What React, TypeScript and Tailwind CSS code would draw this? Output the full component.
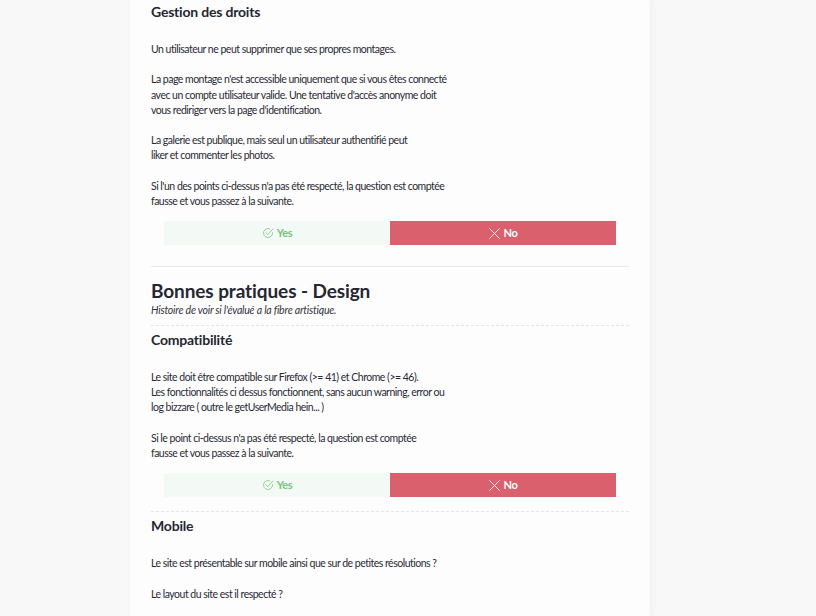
const FONT = { fontFamily: '"Lato", "Open Sans", sans-serif' };

function CheckIcon() {
  return (
    <svg width="12" height="12" viewBox="0 0 24 24" fill="none" stroke="currentColor" strokeWidth="1.6" strokeLinecap="round" strokeLinejoin="round">
      <path d="M21 11.2V12a9 9 0 1 1-5.3-8.2" />
      <path d="M8 11.5l3.5 3.5L22 4" />
    </svg>
  );
}

function XIcon() {
  return (
    <svg width="13" height="13" viewBox="0 0 24 24" fill="none" stroke="currentColor" strokeWidth="1.6" strokeLinecap="round">
      <path d="M3 3l18 18M21 3L3 21" />
    </svg>
  );
}

function Buttons() {
  return (
    <div className="mx-[13px] flex h-[24px]">
      <div className="flex flex-1 items-center justify-center gap-[3px] bg-[#f3f9f5] text-[11px] font-bold text-[#7cc47e]">
        <CheckIcon />
        <span className="tracking-[-0.3px]">Yes</span>
      </div>
      <div className="flex flex-1 items-center justify-center gap-[2px] bg-[#d9606c] text-[11px] font-bold text-white">
        <XIcon />
        <span className="tracking-[-0.3px]">No</span>
      </div>
    </div>
  );
}

function Lines({ lines }: { lines: string[] }) {
  return (
    <div className="text-[10.5px] leading-[15.2px] tracking-[-0.5px] text-[#2a2a33]">
      {lines.map((l, i) => (
        <div key={i} className="h-[15.2px] whitespace-nowrap">{l}</div>
      ))}
    </div>
  );
}

function SubHeading({ children }: { children: string }) {
  return <h3 className="text-[14px] font-bold leading-[18px] tracking-[-0.2px] text-[#262630]">{children}</h3>;
}

export default function App() {
  return (
    <div className="min-h-[616px] w-full bg-[#f8f8f8]" style={FONT}>
      <div className="ml-[130px] h-[616px] w-[520px] overflow-hidden bg-[#fdfdfd] px-[21px] shadow-[2px_0_6px_rgba(0,0,0,0.035)]">
        <div className="pt-[3px]">
          <SubHeading>Gestion des droits</SubHeading>
        </div>
        <div className="mt-[21px]">
          <Lines
            lines={[
              "Un utilisateur ne peut supprimer que ses propres montages.",
              "",
              "La page montage n'est accessible uniquement que si vous êtes connecté",
              "avec un compte utilisateur valide. Une tentative d'accès anonyme doit",
              "vous rediriger vers la page d'identification.",
              "",
              "La galerie est publique, mais seul un utilisateur authentifié peut",
              "liker et commenter les photos.",
              "",
              "Si l'un des points ci-dessus n'a pas été respecté, la question est comptée",
              "fausse et vous passez à la suivante.",
            ]}
          />
        </div>
        <div className="mt-[12px]">
          <Buttons />
        </div>
        <div className="mt-[21px] h-px bg-[#e9e9e9]" />
        <h2 className="mt-[12px] text-[19px] font-bold leading-[24px] tracking-[-0.1px] text-[#262630]">Bonnes pratiques - Design</h2>
        <p className="mt-[1px] text-[10.5px] italic leading-[13px] tracking-[-0.2px] text-[#33333d]">Histoire de voir si l'évalué a la fibre artistique.</p>
        <div className="mt-[8px] border-t border-dashed border-[#e6e6e6]" />
        <div className="mt-[5px]">
          <SubHeading>Compatibilité</SubHeading>
        </div>
        <div className="mt-[21px]">
          <Lines
            lines={[
              "Le site doit être compatible sur Firefox (>= 41) et Chrome (>= 46).",
              "Les fonctionnalités ci dessus fonctionnent, sans aucun warning, error ou",
              "log bizzare ( outre le getUserMedia hein... )",
              "",
              "Si le point ci-dessus n'a pas été respecté, la question est comptée",
              "fausse et vous passez à la suivante.",
            ]}
          />
        </div>
        <div className="mt-[12px]">
          <Buttons />
        </div>
        <div className="mt-[14px] border-t border-dashed border-[#e6e6e6]" />
        <div className="mt-[5px]">
          <SubHeading>Mobile</SubHeading>
        </div>
        <div className="mt-[21px]">
          <Lines
            lines={[
              "Le site est présentable sur mobile ainsi que sur de petites résolutions ?",
              "",
              "Le layout du site est il respecté ?",
            ]}
          />
        </div>
      </div>
    </div>
  );
}
